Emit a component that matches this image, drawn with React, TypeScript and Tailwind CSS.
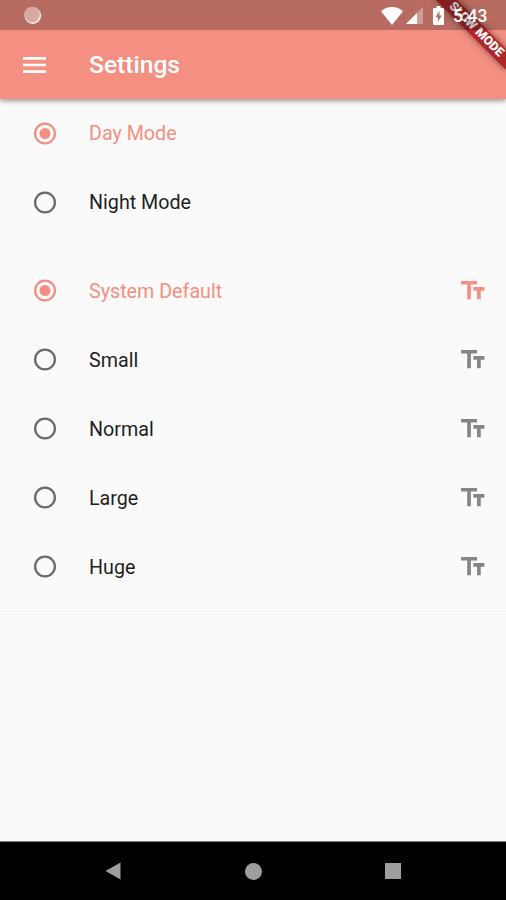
interface Option {
    label: string;
    selected?: boolean;
}

const modes: Option[] = [{ label: 'Day Mode', selected: true }, { label: 'Night Mode' }];

const textSizes: Option[] = [
    { label: 'System Default', selected: true },
    { label: 'Small' },
    { label: 'Normal' },
    { label: 'Large' },
    { label: 'Huge' },
];

function StatusBar() {
    return (
        <div className="relative z-20 flex h-[30px] items-center bg-black/25 pt-px pr-[19px] pl-[23px] text-white">
            <svg className="h-[19px] w-[19px]" viewBox="0 0 19 19">
                <circle cx="9.8" cy="9.6" r="8.400" fill="#fff" fillOpacity="0.85" />
                <circle cx="9" cy="8.6" r="7.800" fill="#d6aaa3" />
            </svg>
            <svg className="mr-px ml-auto h-[18px] w-[22px]" viewBox="0 0 22 18" fill="currentColor">
                <path d="M11 18 0 4.2C3 1.6 6.800 0 11 0s8 1.600 11 4.200z" />
            </svg>
            <svg className="ml-[2px] h-[17px] w-[17px]" viewBox="0 0 17 17" fill="currentColor">
                <path d="M17 0v17H0z" fillOpacity="0.35" />
                <path d="M11 6v11H0z" />
            </svg>
            <svg className="ml-[10px] h-[19px] w-[11px]" viewBox="0 0 11 19">
                <path
                    d="M3.500 0h4v2H10a1 1 0 0 1 1 1v15a1 1 0 0 1-1 1H1a1 1 0 0 1-1-1V3a1 1 0 0 1 1-1h2.500z"
                    fill="#fff"
                />
                <path d="M6.400 4.800 2.500 11.200H5v4.600l3.800-6.400H6.400z" fill="#b76b61" />
            </svg>
            <span className="ml-[9px] w-[34px] text-[17.500px] leading-[30px] font-medium whitespace-nowrap">5:43</span>
        </div>
    );
}

function Banner() {
    return (
        <div className="pointer-events-none absolute top-0 right-0 z-10 h-[99px] w-[120px] overflow-hidden">
            <div className="absolute top-[22.200px] -right-[19.700px] flex h-[14.800px] w-[98.400px] rotate-45 items-center justify-center bg-[#a81c20]/90 text-[12.500px] leading-none font-black whitespace-nowrap text-white shadow-[0_0_7px_rgba(0,0,0,0.5)]">
                SLOW MODE
            </div>
        </div>
    );
}

function Radio({ selected }: { selected?: boolean }) {
    return (
        <svg className="h-6 w-6 flex-shrink-0" viewBox="0 0 24 24" fill="none" stroke="currentColor">
            <circle cx="12" cy="11.500" r="9.900" strokeWidth="2.300" />
            {selected && <circle cx="12" cy="11.500" r="5.500" fill="currentColor" stroke="none" />}
        </svg>
    );
}

function OptionRow({ option, sizeIcon }: { option: Option; sizeIcon?: boolean }) {
    const { label, selected } = option;

    return (
        <li className="flex h-[69px] items-center pr-[19px] pl-[32.500px]">
            <span className={selected ? 'text-[#f48f82]' : 'text-[#6b6b6b]'}>
                <Radio selected={selected} />
            </span>
            <span
                className={`mt-px ml-[32.500px] flex-1 text-[19.700px] leading-6 ${selected ? 'text-[#f48f82]' : 'text-[#1f1f1f]'}`}
            >
                {label}
            </span>
            {sizeIcon && (
                <svg
                    className={`h-[29.500px] w-[29.500px] ${selected ? 'text-[#f48f82]' : 'text-[#858585]'}`}
                    viewBox="0 0 24 24"
                    fill="currentColor"
                >
                    <path d="M2.500 4v3h5v12h3V7h5V4zm19 5h-9v3h3v7h3v-7h3z" />
                </svg>
            )}
        </li>
    );
}

function Divider() {
    return (
        <div className="flex h-[19.500px] items-center">
            <div className="h-px w-full bg-[#f5f5f5]" />
        </div>
    );
}

export default function App() {
    return (
        <div className="relative flex h-[900px] w-[506px] flex-col overflow-hidden bg-[#fafafa] font-['Roboto',sans-serif]">
            <header className="h-[99px] bg-[#f48f82] shadow-[0_2px_5px_rgba(0,0,0,0.4)]">
                <StatusBar />
                <div className="flex h-[69px] items-center pl-[23px] text-white">
                    <svg className="h-4 w-[23px]" viewBox="0 0 23 16" fill="currentColor">
                        <path d="M0 0h23v2.700H0zm0 6.650h23v2.700H0zm0 6.650h23V16H0z" />
                    </svg>
                    <h1 className="mt-px ml-[43px] text-[24.600px] leading-none font-medium">Settings</h1>
                </div>
            </header>
            <Banner />

            <main className="flex-1">
                <ul>
                    {modes.map((option) => (
                        <OptionRow key={option.label} option={option} />
                    ))}
                </ul>
                <Divider />
                <ul>
                    {textSizes.map((option) => (
                        <OptionRow key={option.label} option={option} sizeIcon />
                    ))}
                </ul>
                <Divider />
            </main>

            <nav className="flex h-[59px] items-center justify-between border-t border-[#808080] bg-black px-[105px]">
                <svg className="h-[18px] w-[16px]" viewBox="0 0 16 18" fill="#9e9e9e">
                    <path d="M15.500.500v17L.500 9z" />
                </svg>
                <div className="h-[17px] w-[17px] rounded-full bg-[#9e9e9e]" />
                <div className="h-4 w-4 bg-[#9e9e9e]" />
            </nav>
        </div>
    );
}
